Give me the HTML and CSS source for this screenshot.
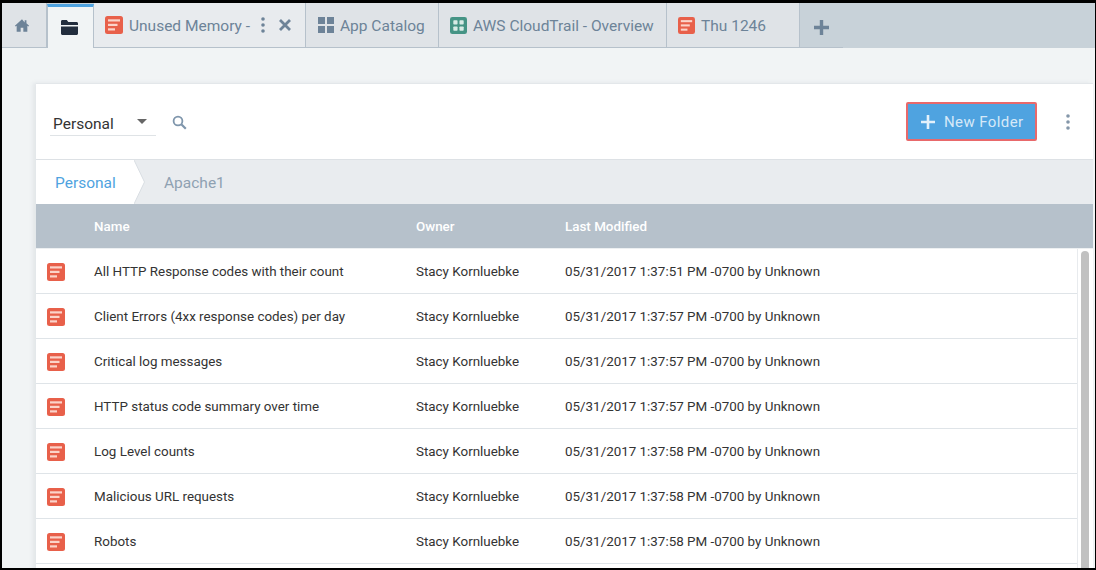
FILE: index.html
```html
<!DOCTYPE html>
<html lang="en">
<head>
  <meta charset="UTF-8" />
  <title>Library</title>
  <link rel="stylesheet" href="styles.css">
</head>
<body>
  <svg class="defs" width="0" height="0">
    <symbol id="doc" viewBox="0 0 18 18">
      <rect width="18" height="18" rx="2.5" fill="#e8604a"/>
      <rect x="3" y="3.3" width="12" height="2.2" fill="#fbd3c9"/>
      <rect x="3" y="7.8" width="9.5" height="2.2" fill="#fbd3c9"/>
      <rect x="3" y="12.3" width="7" height="2.2" fill="#fbd3c9"/>
    </symbol>
    <symbol id="dots" viewBox="0 0 6 18">
      <circle cx="3" cy="3" r="1.8"/>
      <circle cx="3" cy="9" r="1.8"/>
      <circle cx="3" cy="15" r="1.8"/>
    </symbol>
  </svg>

  <div class="frame">
    <div class="tabbar">
      <div class="tab tab-home">
        <svg width="16" height="15" viewBox="0 0 18 16"><path fill="#6d8398" d="M9 1 1 8.2l.9 1L3 8.3V15h4.500v-4.500h3V15H15V8.300l1.100.9.9-1-3-2.700V2h-2v2.700z"/></svg>
      </div>
      <div class="tab tab-folder">
        <svg width="17" height="15" viewBox="0 0 17 15"><path fill="#222d3d" d="M0 1.500C0 .7.600 0 1.300 0h4.500l1.500 2h8.200c.8 0 1.500.6 1.500 1.300V5H0zM0 6.500h17v7c0 .8-.7 1.500-1.500 1.500h-14C.7 15 0 14.300 0 13.500z"/></svg>
      </div>
      <div class="tab tab-memory">
        <svg class="tab-icon"><use href="#doc"/></svg>
        <span class="tab-label">Unused Memory -</span>
        <svg class="tab-dots"><use href="#dots"/></svg>
        <svg class="tab-close" width="12" height="12" viewBox="0 0 12 12"><path d="M1 1l10 10m0-10L1 11" stroke="#6d8398" stroke-width="2.800" fill="none"/></svg>
      </div>
      <div class="tab tab-catalog">
        <svg class="tab-icon icon-grid" viewBox="0 0 16 16"><rect width="7" height="7" fill="#6d8398"/><rect x="9" width="7" height="7" fill="#6d8398"/><rect y="9" width="7" height="7" fill="#6d8398"/><rect x="9" y="9" width="7" height="7" fill="#6d8398"/></svg>
        <span class="tab-label">App Catalog</span>
      </div>
      <div class="tab tab-aws">
        <svg class="tab-icon icon-small" viewBox="0 0 18 18"><rect width="18" height="18" rx="2.500" fill="#459485"/><rect x="3.500" y="3.500" width="4.500" height="4.500" rx=".8" fill="#d7ebe6"/><rect x="10" y="3.500" width="4.500" height="4.500" rx=".8" fill="#d7ebe6"/><rect x="3.500" y="10" width="4.500" height="4.500" rx=".8" fill="#d7ebe6"/><rect x="10" y="10" width="4.500" height="4.500" rx=".8" fill="#d7ebe6"/></svg>
        <span class="tab-label">AWS CloudTrail - Overview</span>
      </div>
      <div class="tab tab-thu">
        <svg class="tab-icon icon-small"><use href="#doc"/></svg>
        <span class="tab-label">Thu 1246</span>
      </div>
      <div class="tab-add">
        <svg width="15" height="15" viewBox="0 0 15 15"><path d="M7.500 0v15M0 7.500h15" stroke="#6d8398" stroke-width="3.400"/></svg>
      </div>
    </div>

    <div class="content">
      <div class="panel">
        <div class="toolbar">
          <div class="picker">
            <span>Personal</span>
            <i class="caret"></i>
          </div>
          <svg class="search" width="15" height="15" viewBox="0 0 15 15"><circle cx="6" cy="6" r="4.400" fill="none" stroke="#7f96ac" stroke-width="1.800"/><path d="M9.300 9.300l4.500 4.500" stroke="#7f96ac" stroke-width="2.200"/></svg>
          <button class="btn-new">
            <svg width="14" height="14" viewBox="0 0 14 14"><path d="M7 0v14M0 7h14" stroke="#e3f1fb" stroke-width="2.600"/></svg>
            New Folder
          </button>
          <svg class="more"><use href="#dots"/></svg>
        </div>

        <div class="crumbs">
          <div class="crumb-on">Personal</div>
          <svg class="crumb-tip" width="12" height="44" viewBox="0 0 12 44"><path d="M0 0 10.500 22 0 44z" fill="#fff"/><path d="M0 0 10.500 22 0 44" fill="none" stroke="#d9dee3"/></svg>
          <div class="crumb">Apache1</div>
        </div>

        <div class="row head">
          <span class="col-name">Name</span>
          <span class="col-owner">Owner</span>
          <span class="col-date">Last Modified</span>
        </div>

        <div class="list">
          <div class="rows">
            <div class="row">
              <svg class="row-icon"><use href="#doc"/></svg>
              <span class="col-name">All HTTP Response codes with their count</span>
              <span class="col-owner">Stacy Kornluebke</span>
              <span class="col-date">05/31/2017 1:37:51 PM -0700 by Unknown</span>
            </div>
            <div class="row">
              <svg class="row-icon"><use href="#doc"/></svg>
              <span class="col-name">Client Errors (4xx response codes) per day</span>
              <span class="col-owner">Stacy Kornluebke</span>
              <span class="col-date">05/31/2017 1:37:57 PM -0700 by Unknown</span>
            </div>
            <div class="row">
              <svg class="row-icon"><use href="#doc"/></svg>
              <span class="col-name">Critical log messages</span>
              <span class="col-owner">Stacy Kornluebke</span>
              <span class="col-date">05/31/2017 1:37:57 PM -0700 by Unknown</span>
            </div>
            <div class="row">
              <svg class="row-icon"><use href="#doc"/></svg>
              <span class="col-name">HTTP status code summary over time</span>
              <span class="col-owner">Stacy Kornluebke</span>
              <span class="col-date">05/31/2017 1:37:57 PM -0700 by Unknown</span>
            </div>
            <div class="row">
              <svg class="row-icon"><use href="#doc"/></svg>
              <span class="col-name">Log Level counts</span>
              <span class="col-owner">Stacy Kornluebke</span>
              <span class="col-date">05/31/2017 1:37:58 PM -0700 by Unknown</span>
            </div>
            <div class="row">
              <svg class="row-icon"><use href="#doc"/></svg>
              <span class="col-name">Malicious URL requests</span>
              <span class="col-owner">Stacy Kornluebke</span>
              <span class="col-date">05/31/2017 1:37:58 PM -0700 by Unknown</span>
            </div>
            <div class="row">
              <svg class="row-icon"><use href="#doc"/></svg>
              <span class="col-name">Robots</span>
              <span class="col-owner">Stacy Kornluebke</span>
              <span class="col-date">05/31/2017 1:37:58 PM -0700 by Unknown</span>
            </div>
          </div>
          <div class="scrollbar"><div class="thumb"></div></div>
        </div>
      </div>
    </div>
  </div>
</body>
</html>
```

FILE: styles.css
```css
* {
  box-sizing: border-box;
  font-family: Roboto, sans-serif;
}

html, body {
  margin: 0;
  height: 100%;
  overflow: hidden;
}

.defs {
  display: block;
  height: 0;
}

.frame {
  height: 570px;
  border-style: solid;
  border-color: #000;
  border-width: 3px 1px 2px 2px;
  background: #f1f4f5;
  overflow: hidden;
}

.tabbar {
  display: flex;
  height: 45px;
  background: #c8d2d9;
}

.tab {
  display: flex;
  align-items: center;
  height: 45px;
  background: #dfe3e7;
  border-right: 1px solid #b6c1cb;
  border-bottom: 1px solid #b6c1cb;
  color: #6d8398;
  font-size: 15.5px;
  white-space: nowrap;
}

.tab-home {
  width: 45px;
  justify-content: center;
  padding-right: 5px;
}

.tab-folder {
  width: 47px;
  justify-content: center;
  padding-right: 3px;
  background: #f1f4f5;
  border-top: 3px solid #4fa3e0;
  border-left: 1px solid #b6c1cb;
  border-bottom: 0;
  margin-top: 1px;
  height: 44px;
}

.tab-memory {
  width: 212px;
  padding-left: 11px;
  background: #e8ebee;
}

.tab-catalog {
  width: 133px;
  padding-left: 12px;
}

.tab-aws {
  width: 228px;
  padding-left: 11px;
}

.tab-thu {
  width: 133px;
  padding-left: 11px;
}

.tab-label {
  padding-top: 2px;
}

.tab-icon {
  width: 18px;
  height: 18px;
  flex: none;
  margin-right: 6px;
}

.icon-small {
  width: 17px;
  height: 17px;
}

.icon-grid {
  width: 16px;
  height: 16px;
}

.tab-dots {
  width: 6px;
  height: 18px;
  flex: none;
  fill: #6d8398;
  margin-left: 10px;
}

.tab-close {
  flex: none;
  margin-left: 13px;
}

.tab-add {
  display: flex;
  align-items: center;
  justify-content: center;
  width: 43px;
  height: 45px;
  padding-top: 5px;
  border-bottom: 1px solid #b6c1cb;
}

.content {
  padding: 35px 0 0 34px;
}

.panel {
  width: 1057px;
  background: #fff;
  box-shadow: -3px 0 4px rgba(120, 135, 150, 0.12);
  border-top: 1px solid #e3e7ea;
}

.toolbar {
  display: flex;
  align-items: center;
  height: 76px;
  padding: 0 22px 0 14px;
  border-bottom: 1px solid #dde1e5;
}

.picker {
  display: flex;
  justify-content: space-between;
  width: 106px;
  height: 27px;
  padding: 6px 9px 0 3px;
  margin-top: 2px;
  border-bottom: 1px solid #dfe3e6;
  color: #333;
  font-size: 15.5px;
}

.caret {
  width: 0;
  height: 0;
  margin-top: 4px;
  border: 5px solid transparent;
  border-top: 5px solid #666;
}

.search {
  margin: 2px 0 0 16px;
}

.btn-new {
  display: flex;
  align-items: center;
  gap: 9px;
  width: 131px;
  height: 39px;
  margin-left: auto;
  padding: 0 0 0 13px;
  background: #4fa3e0;
  border: 2px solid #e8696b;
  border-radius: 2px;
  color: #d6e9f8;
  font-size: 15px;
  letter-spacing: 0.4px;
}

.more {
  width: 6px;
  height: 18px;
  margin-left: 28px;
  fill: #8497a9;
}

.crumbs {
  display: flex;
  align-items: center;
  height: 44px;
  background: #e9ecef;
  font-size: 15.5px;
}

.crumb-on {
  display: flex;
  align-items: center;
  width: 98px;
  height: 44px;
  padding-left: 19px;
  padding-top: 1px;
  background: #fff;
  color: #4fa3e0;
}

.crumb-tip {
  flex: none;
}

.crumb {
  padding-left: 18px;
  padding-top: 2px;
  color: #8fa1b2;
}

.row {
  display: flex;
  align-items: center;
  height: 45px;
  font-size: 13.4px;
  color: #333;
  border-bottom: 1px solid #dfe4e8;
  position: relative;
}

.head {
  height: 44px;
  background: #b6c1cb;
  color: #fff;
  font-weight: 500;
  border-bottom: 0;
}

.row-icon {
  position: absolute;
  left: 11px;
  top: 14px;
  width: 18px;
  height: 18px;
}

.col-name {
  width: 322px;
  margin-left: 58px;
}

.col-owner {
  width: 149px;
}

.list {
  display: flex;
  height: 322px;
  border-top: 1px solid #edf0f2;
}

.rows {
  width: 1042px;
  flex: none;
  border-right: 1px solid #e8ebee;
}

.scrollbar {
  flex: 1;
  padding: 2px 3px;
}

.thumb {
  width: 8px;
  height: 340px;
  border-radius: 4px;
  background: #c1c1c1;
}
```
